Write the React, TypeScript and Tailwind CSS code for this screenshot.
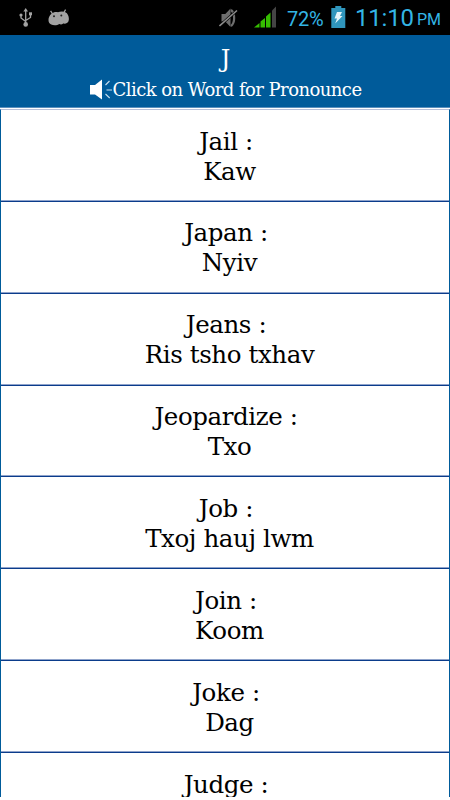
import * as React from 'react';

interface Word {
  english: string;
  hmong?: string;
}

const words: Word[] = [
  { english: 'Jail', hmong: 'Kaw' },
  { english: 'Japan', hmong: 'Nyiv' },
  { english: 'Jeans', hmong: 'Ris tsho txhav' },
  { english: 'Jeopardize', hmong: 'Txo' },
  { english: 'Job', hmong: 'Txoj hauj lwm' },
  { english: 'Join', hmong: 'Koom' },
  { english: 'Joke', hmong: 'Dag' },
  { english: 'Judge' }
];

const UsbIcon = () => (
  <svg width="14" height="20" viewBox="0 0 14 20" fill="none" stroke="#a3a3a3" strokeWidth="1.3">
    <path d="M6.7 3v13M2 7v3l4.7 3.5M11.5 6v3.5L6.7 12.5" />
    <path d="M6.7 0 9 3.6H4.4z" fill="#a3a3a3" stroke="none" />
    <circle cx="2" cy="7" r="1.6" fill="#a3a3a3" stroke="none" />
    <path d="M10 4.3h3v3h-3z" fill="#a3a3a3" stroke="none" />
    <circle cx="6.7" cy="16.4" r="2.3" fill="#a3a3a3" stroke="none" />
  </svg>
);

const DroidIcon = () => (
  <svg width="22" height="17" viewBox="0 0 22 17">
    <path d="M2.6 1.8 4.6 5M17.6.6 15.6 4" stroke="#a3a3a3" strokeWidth="1.3" />
    <path
      d="M3.4 4.8C5.5 3 8 2.7 10 3.3c2.3-1 5.6-1 7.4 0 2.6 1.3 3.8 4.5 3.4 7.6-.4 3-3 4.3-5.6 3.7-1.3 1-2.6 1-3.8.5-2.2 1.4-5.7 1.7-8.2.5C-.6 13.8-.3 8 3.4 4.8z"
      fill="#a3a3a3"
    />
    <circle cx="6" cy="7.2" r="1" fill="#222" />
    <circle cx="13.3" cy="6.4" r="1" fill="#222" />
  </svg>
);

const MuteIcon = () => (
  <svg width="20" height="20" viewBox="0 0 20 20">
    <path d="M2.5 6h3.8L11.5.5v18.5L6.3 13.5H2.5z" fill="#6e6e6e" />
    <path d="M12 2c4.2 3 4.2 13 0 16" fill="none" stroke="#6e6e6e" strokeWidth="2.2" />
    <path d="M1 17.5 18 2.5" stroke="#000" strokeWidth="2.8" />
    <path d="M.5 18 18 2.5" stroke="#8c8c8c" strokeWidth="1.6" />
  </svg>
);

const SignalIcon = () => (
  <svg width="23" height="22" viewBox="0 0 23 22">
    <path d="M0 21.5 5.5 17v4.5zM6.5 15.5 11 12v9.5H6.5zM12 10.5 16.5 6.5v15H12z" fill="#35bd00" />
    <path d="M18 4.5 22 .5v21h-4z" fill="#444" />
  </svg>
);

const BatteryIcon = () => (
  <svg width="15" height="22" viewBox="0 0 15 22">
    <path d="M4.3 0h6v2h4v20H.3V2h4z" fill="#3096bd" />
    <path d="M6 6h5L9 10h2.5L4.2 17.5 6 12.5H3.5z" fill="#e5f5fa" />
  </svg>
);

const SpeakerIcon = () => (
  <svg width="24" height="22" viewBox="0 0 24 22" className="shrink-0">
    <path d="M1 6h5l7-5.5v20L6 15.5H1z" fill="#fff" />
    <path d="m16.5 6 4-4M17.5 11H23M16.5 15l4.2 4" stroke="#c9dfed" strokeWidth="1.1" />
  </svg>
);

const StatusBar = () => (
  <div className="flex h-[35px] items-center bg-black pr-[9px] pl-[19px] font-[Roboto,sans-serif] text-[#33b5e5]">
    <UsbIcon />
    <div className="ml-[15px]">
      <DroidIcon />
    </div>
    <div className="mb-[2px] ml-auto flex items-center">
      <div className="mt-[2px] mr-px">
        <MuteIcon />
      </div>
      <div className="ml-[14px]">
        <SignalIcon />
      </div>
      <span className="ml-[10px] w-[38px] pt-1 text-[20px] leading-6 tracking-[-0.3px]">72%</span>
      <div className="ml-[6px]">
        <BatteryIcon />
      </div>
      <span className="ml-[9px] w-[58px] pt-[2px] text-[24px] leading-6 tracking-[-0.2px]">11:10</span>
      <span className="ml-1 w-[24px] pt-[6px] text-[16px] leading-6">PM</span>
    </div>
  </div>
);

const Header = () => (
  <header className="h-[73px] border-b border-[#5b8fbd] bg-[#005b9a] text-center text-white">
    <h1 className="h-[44px] pt-[9px] pl-px text-[24px] leading-[30px]">J</h1>
    <div className="flex h-[22px] items-center justify-center whitespace-nowrap">
      <SpeakerIcon />
      <span className="text-[18px] leading-[22px] tracking-[-0.55px]">Click on Word for Pronounce</span>
    </div>
  </header>
);

const WordRow = ({ word }: { word: Word }) => (
  <li className="h-[91.85px] border-b border-[#0b3c8b] pt-[16.6px] text-center text-[24.5px] leading-[30px] tracking-[-0.4px] whitespace-pre shadow-[inset_0_-1px_0_#8fa3cb]">
    <p className="pl-[2px]">{word.english} :</p>
    {word.hmong && <p className="pl-[9px]">{word.hmong}</p>}
  </li>
);

const App = () => (
  <div className="h-[800px] overflow-hidden bg-white font-['DejaVu_Serif',serif] text-black">
    <div className="h-[797px] overflow-hidden">
      <StatusBar />
      <Header />
      <ul className="mt-px border-x border-t border-x-[#005b9a] border-t-[#b5bed8]">
        {words.map(word => (
          <WordRow key={word.english} word={word} />
        ))}
      </ul>
    </div>
  </div>
);

export default App;
